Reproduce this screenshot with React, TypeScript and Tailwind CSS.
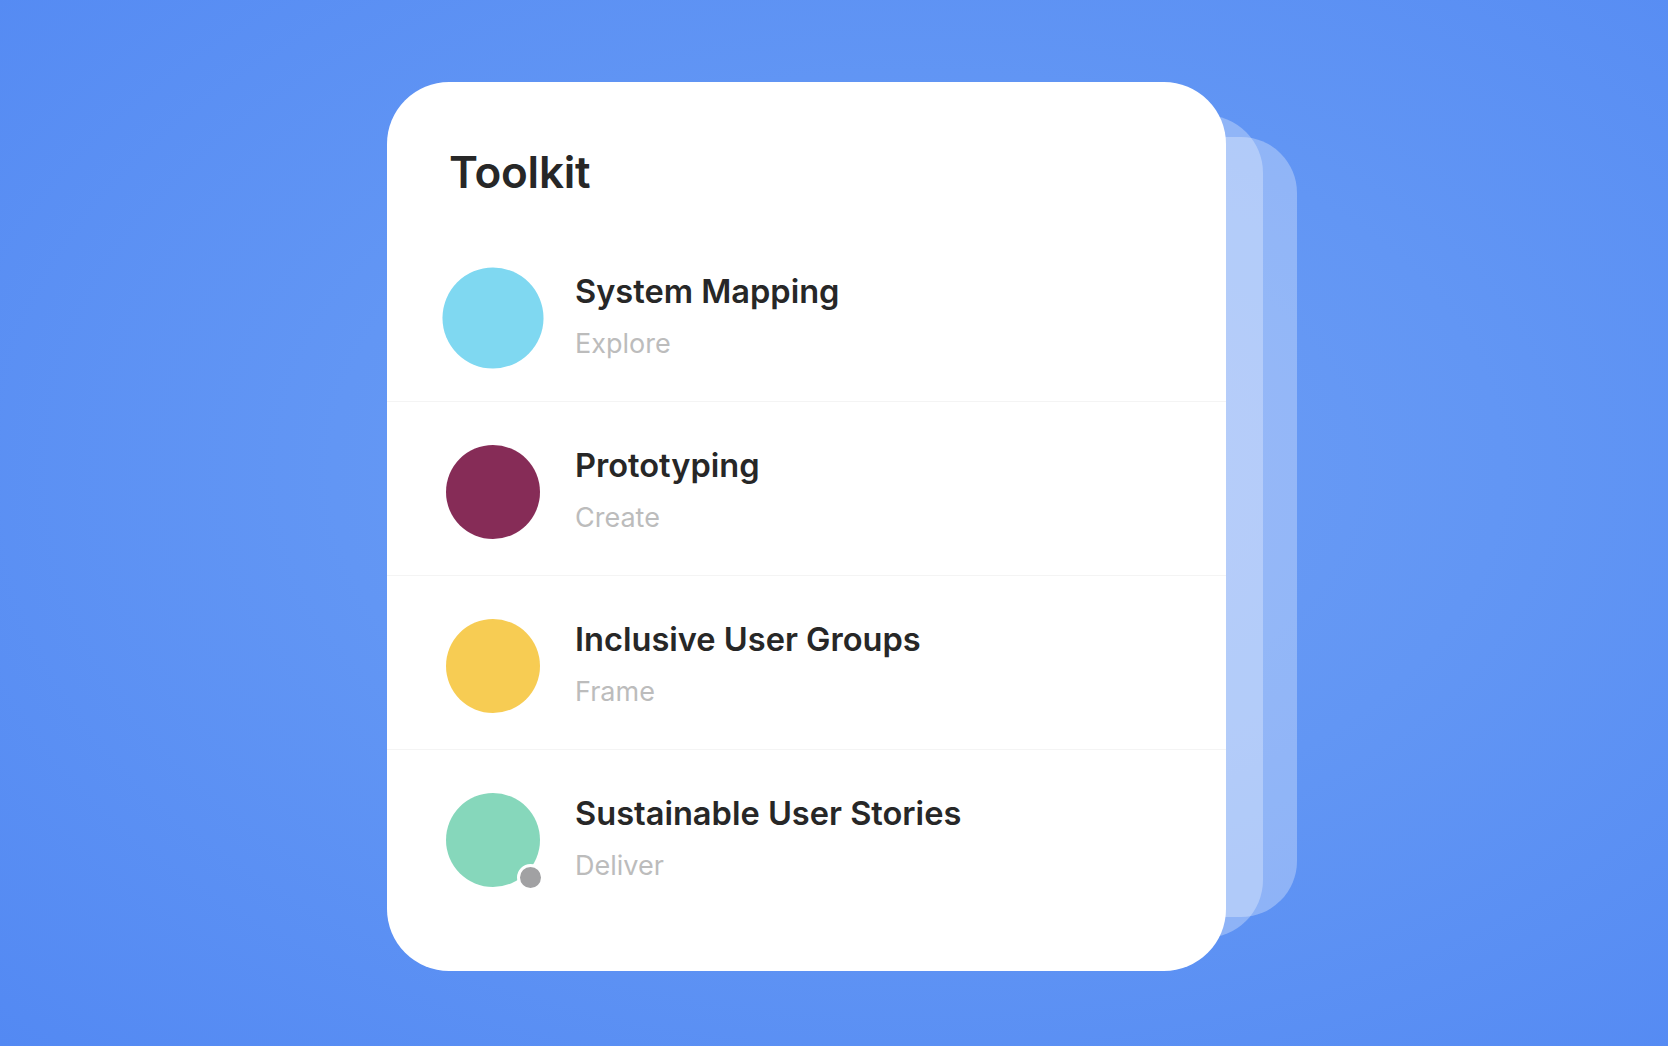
const tools = [
  { name: "System Mapping", stage: "Explore", color: "bg-[#7fd8f1]", big: true },
  { name: "Prototyping", stage: "Create", color: "bg-[#862c57]" },
  { name: "Inclusive User Groups", stage: "Frame", color: "bg-[#f7cc53]" },
  { name: "Sustainable User Stories", stage: "Deliver", color: "bg-[#86d7bb]", dot: true },
];

export default function App() {
  return (
    <div className="h-[1046px] w-full overflow-hidden bg-[radial-gradient(ellipse_at_55%_45%,#6e9ef5_0%,#6296f4_45%,#5389f3_100%)] pl-[387px] pt-[82px] font-['Inter',sans-serif]">
      <div className="relative h-[889px] w-[839px]">
        {/* stacked cards behind */}
        <div className="absolute left-[174px] top-[55px] h-[780px] w-[736px] rounded-[56px] bg-white/30" />
        <div className="absolute left-[99px] top-[33px] h-[823px] w-[777px] rounded-[58px] bg-white/30" />

        {/* main card */}
        <div className="relative flex h-full w-full flex-col rounded-[62px] bg-white">
          <div className="h-[146px] pl-[62px] pt-[68px]">
            <h1 className="text-[44px] font-semibold leading-[44px] tracking-[-0.2px] text-[#272727]">Toolkit</h1>
          </div>

          {tools.map((t, i) => (
            <div
              key={t.name}
              className={`flex h-[174px] items-start gap-[35px] pl-[59px] pt-[43px] ${i < tools.length - 1 ? "border-b border-[#f4f4f4]" : ""}`}
            >
              <div className="relative h-[94px] w-[94px] shrink-0">
                <div className={`h-full w-full rounded-full ${t.color} ${t.big ? "scale-[1.075]" : ""}`} />
                {t.dot && (
                  <div className="absolute left-[71px] top-[71px] h-[27px] w-[27px] rounded-full border-[3px] border-white bg-[#a1a1a3]" />
                )}
              </div>
              <div className="flex flex-col">
                <div className="text-[32.6px] font-semibold leading-[40px] text-[#272727]">{t.name}</div>
                <div className="mt-4 text-[27px] leading-[33px] text-[#bcbcbc]">{t.stage}</div>
              </div>
            </div>
          ))}
        </div>
      </div>
    </div>
  );
}
